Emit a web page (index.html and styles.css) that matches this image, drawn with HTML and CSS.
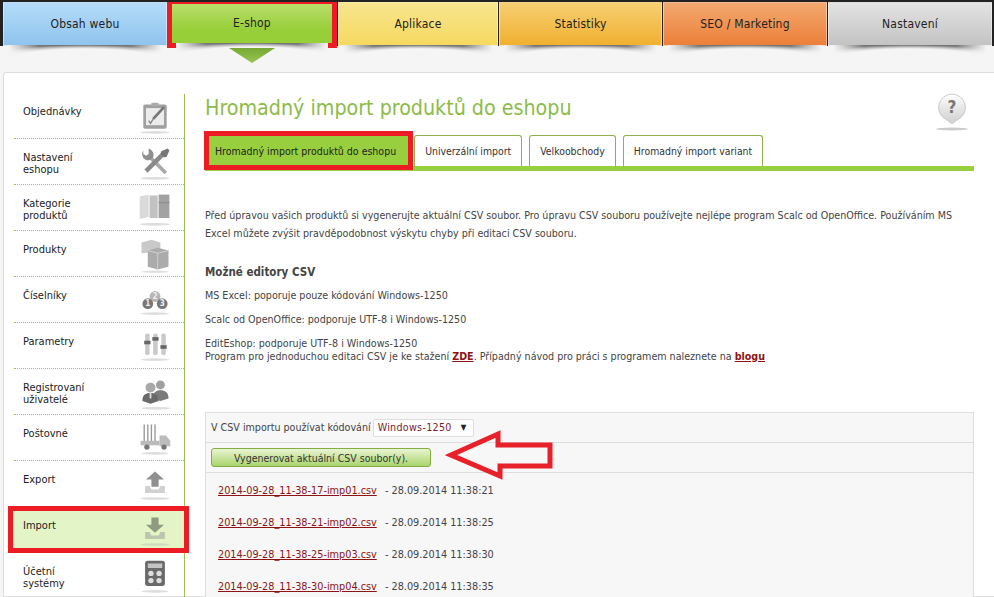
FILE: index.html
```html
<!DOCTYPE html>
<html lang="cs">
<head>
    <meta charset="UTF-8">
    <meta name="viewport" content="width=device-width, initial-scale=1.0">
    <title>Hromadný import produktů do eshopu</title>
    <link rel="stylesheet" href="styles.css">
</head>
<body>
    <!-- Top menu -->
    <nav class="top-nav">
        <a class="nav-item nav-blue">Obsah webu</a>
        <a class="nav-item nav-green nav-active">E-shop</a>
        <a class="nav-item nav-yellow">Aplikace</a>
        <a class="nav-item nav-amber">Statistiky</a>
        <a class="nav-item nav-orange">SEO / Marketing</a>
        <a class="nav-item nav-grey">Nastavení</a>
    </nav>

    <div class="page">
        <aside class="sidebar">
            <a class="side-item">
                <span class="side-label">Objednávky</span>
                <svg class="side-icon" viewBox="0 0 40 40"><rect x="7" y="5" width="26" height="27" rx="2" fill="#a0a0a0"/><rect x="10" y="9" width="20" height="19" fill="#ececec"/><rect x="16" y="3" width="8" height="4" rx="1" fill="#aaa"/><path d="M13 23l2 3 3-5" fill="none" stroke="#888" stroke-width="1.500"/><path d="M18 21L30 8" stroke="#777" stroke-width="3"/><ellipse cx="20" cy="36" rx="16" ry="1.500" fill="#ddd"/></svg>
            </a>
            <a class="side-item">
                <span class="side-label">Nastavení<br>eshopu</span>
                <svg class="side-icon" viewBox="0 0 40 40"><path d="M13 12l19 19" stroke="#a8a8a8" stroke-width="4"/><path d="M7 6a7 7 0 0 0 2 10 7 7 0 0 0 8-1 7 7 0 0 0 0-8 7 7 0 0 0-4-3v6l-3 2-3-2z" fill="#8f8f8f"/><path d="M28 11L10 29" stroke="#8a8a8a" stroke-width="5"/><path d="M27 7l7-3 2 2-3 7-3 1-4-4z" fill="#777"/><ellipse cx="20" cy="37" rx="16" ry="1.500" fill="#ddd"/></svg>
            </a>
            <a class="side-item">
                <span class="side-label">Kategorie<br>produktů</span>
                <svg class="side-icon" viewBox="0 0 40 40"><path d="M3 6l10-2v25l-10 2z" fill="#dadada"/><path d="M14 5h9v25h-9z" fill="#c2c2c2"/><path d="M24 4h12v26H24z" fill="#a2a2a2"/><path d="M24 13h12" stroke="#888"/><ellipse cx="20" cy="37" rx="17" ry="1.500" fill="#ddd"/></svg>
            </a>
            <a class="side-item">
                <span class="side-label">Produkty</span>
                <svg class="side-icon" viewBox="0 0 40 40"><path d="M5 6l11-3 10 3v10l-21 2z" fill="#c9c9c9"/><path d="M12 15l11-3 12 3v18l-12 3-11-3z" fill="#ababab"/><path d="M12 15l11 3 12-3M23 18v18" fill="none" stroke="#d5d5d5"/><ellipse cx="20" cy="38.500" rx="15" ry="1.200" fill="#ddd"/></svg>
            </a>
            <a class="side-item">
                <span class="side-label">Číselníky</span>
                <svg class="side-icon" viewBox="0 0 40 40"><circle cx="20" cy="15" r="6" fill="#b5b5b5"/><circle cx="12" cy="23" r="6" fill="#777"/><circle cx="28" cy="23" r="6" fill="#777"/><text class="icon-digit" x="20" y="18">2</text><text class="icon-digit" x="12" y="26">1</text><text class="icon-digit" x="28" y="26">3</text><ellipse cx="20" cy="34" rx="16" ry="1.500" fill="#ddd"/></svg>
            </a>
            <a class="side-item">
                <span class="side-label">Parametry</span>
                <svg class="side-icon" viewBox="0 0 40 40"><rect x="9" y="5" width="5" height="24" rx="2" fill="#c9c9c9"/><rect x="18" y="5" width="5" height="24" rx="2" fill="#c9c9c9"/><rect x="27" y="5" width="5" height="24" rx="2" fill="#c9c9c9"/><rect x="8" y="13" width="7" height="4" fill="#666"/><rect x="17" y="9" width="7" height="4" fill="#666"/><rect x="26" y="18" width="7" height="4" fill="#666"/><ellipse cx="20" cy="34" rx="16" ry="1.500" fill="#ddd"/></svg>
            </a>
            <a class="side-item">
                <span class="side-label">Registrovaní<br>uživatelé</span>
                <svg class="side-icon" viewBox="0 0 40 40"><circle cx="26" cy="11" r="5" fill="#a0a0a0"/><path d="M18 26c0-7 3-9 8-9s9 2 9 9l-9 3z" fill="#7b7b7b"/><circle cx="15" cy="14" r="5.500" fill="#a8a8a8"/><path d="M6 29c0-7 3-9 9-9s9 2 9 9l-9 3z" fill="#6a6a6a"/><path d="M15 20v6" stroke="#ddd" stroke-width="2"/><ellipse cx="21" cy="37" rx="16" ry="1.500" fill="#ddd"/></svg>
            </a>
            <a class="side-item">
                <span class="side-label">Poštovné</span>
                <svg class="side-icon" viewBox="0 0 40 40"><path d="M8 4v20M12 4v20M16 4v20M20 4v20" stroke="#999" stroke-width="1.500"/><rect x="4" y="22" width="21" height="5" fill="#bbb"/><path d="M25 16h7l5 6v6H25z" fill="#bcbcbc"/><circle cx="11" cy="29" r="3" fill="#777"/><circle cx="30" cy="29" r="3" fill="#777"/><ellipse cx="20" cy="36" rx="15" ry="1.500" fill="#ddd"/></svg>
            </a>
            <a class="side-item">
                <span class="side-label">Export</span>
                <svg class="side-icon" viewBox="0 0 40 40"><path d="M20 5l10 9h-6v8h-8v-8h-6z" fill="#909090"/><path d="M9 21h5l2 4h8l2-4h5v8H9z" fill="#d0d0d0"/><ellipse cx="20" cy="35" rx="16" ry="1.500" fill="#ddd"/></svg>
            </a>
            <a class="side-item side-active">
                <span class="side-label">Import</span>
                <svg class="side-icon" viewBox="0 0 40 40"><path d="M20 22L10 13h6V5h8v8h6z" fill="#8f9a80"/><path d="M9 21h5l2 4h8l2-4h5v8H9z" fill="#bcc6ae"/><ellipse cx="20" cy="35" rx="16" ry="1.500" fill="#cfdcbd"/></svg>
            </a>
            <a class="side-item">
                <span class="side-label">Účetní<br>systémy</span>
                <svg class="side-icon" viewBox="0 0 40 40"><rect x="9" y="2" width="22" height="28" rx="3" fill="#6a6a6a"/><rect x="12" y="5" width="16" height="5" fill="#c5c5c5"/><circle cx="15.500" cy="16" r="3" fill="#ddd"/><circle cx="24.500" cy="16" r="3" fill="#ddd"/><circle cx="15.500" cy="24" r="3" fill="#ddd"/><circle cx="24.500" cy="24" r="3" fill="#ddd"/><ellipse cx="20" cy="36" rx="15" ry="1.500" fill="#ddd"/></svg>
            </a>
        </aside>

        <main class="content">
            <div class="title-row">
                <h1>Hromadný import produktů do eshopu</h1>
                <svg class="help-icon" viewBox="0 0 34 40"><defs><linearGradient id="helpfill" x1="0" y1="0" x2="0" y2="1"><stop offset="0" stop-color="#fdfdfd"/><stop offset="1" stop-color="#cfcfcf"/></linearGradient></defs><path d="M17 2a13.500 13.500 0 0 1 5 26l-5 4-5-4A13.500 13.500 0 0 1 17 2z" fill="url(#helpfill)" stroke="#ccc"/><text class="help-mark" x="17" y="21">?</text><ellipse cx="17" cy="37" rx="16" ry="1.500" fill="#ccc"/></svg>
            </div>

            <div class="tabs">
                <a class="tab tab-active">Hromadný import produktů do eshopu</a>
                <a class="tab">Univerzální import</a>
                <a class="tab">Velkoobchody</a>
                <a class="tab">Hromadný import variant</a>
            </div>

            <p class="intro">Před úpravou vašich produktů si vygenerujte aktuální CSV soubor. Pro úpravu CSV souboru používejte nejlépe program Scalc od OpenOffice. Používáním MS Excel můžete zvýšit pravděpodobnost výskytu chyby při editaci CSV souboru.</p>

            <h2>Možné editory CSV</h2>
            <p class="editor">MS Excel: poporuje pouze kódování Windows-1250</p>
            <p class="editor">Scalc od OpenOffice: podporuje UTF-8 i Windows-1250</p>
            <p class="editor">EditEshop: podporuje UTF-8 i Windows-1250<br>Program pro jednoduchou editaci CSV je ke stažení <a class="strong-link">ZDE</a>. Případný návod pro práci s programem naleznete na <a class="strong-link">blogu</a></p>

            <section class="csv-box">
                <div class="csv-row">
                    V CSV importu používat kódování
                    <span class="fake-select">Windows-1250 <i class="select-arrow">▼</i></span>
                </div>
                <div class="csv-row csv-row-button">
                    <button type="button">Vygenerovat aktuální CSV soubor(y).</button>
                    <svg class="red-arrow" viewBox="0 0 112 50"><path d="M6 25L53 4v11h52v21H55v10z" fill="none" stroke="#e8202a" stroke-width="5"/></svg>
                </div>
                <ul class="csv-list">
                    <li><a>2014-09-28_11-38-17-imp01.csv</a> - 28.09.2014 11:38:21</li>
                    <li><a>2014-09-28_11-38-21-imp02.csv</a> - 28.09.2014 11:38:25</li>
                    <li><a>2014-09-28_11-38-25-imp03.csv</a> - 28.09.2014 11:38:30</li>
                    <li><a>2014-09-28_11-38-30-imp04.csv</a> - 28.09.2014 11:38:35</li>
                </ul>
            </section>
        </main>
    </div>
</body>
</html>
```

FILE: styles.css
```css
html, body {
    margin: 0;
    height: 597px;
    overflow: hidden;
}
body {
    font-family: "DejaVu Sans Condensed", "DejaVu Sans", Verdana, sans-serif;
    font-stretch: condensed;
    font-size: 10.64px;
    color: #444;
    background: linear-gradient(#222 46px, #f5f5f5 46px);
}
.top-nav {
    display: flex;
    height: 44px;
    padding: 2px 1px 0 3px;
}
.nav-item {
    position: relative;
    flex: 1;
    display: flex;
    align-items: center;
    justify-content: center;
    box-sizing: border-box;
    border: 1px solid rgba(255, 255, 255, 0.45);
    margin-right: 1px;
    padding-bottom: 1px;
    font-size: 12px;
    letter-spacing: 0.2px;
    color: #222;
}
/* curved shadow under each menu item */
.nav-item::after {
    content: "";
    position: absolute;
    left: 4px;
    right: 4px;
    top: 100%;
    height: 12px;
    background:
        linear-gradient(to right, #f5f5f5, rgba(245, 245, 245, 0) 20%, rgba(245, 245, 245, 0) 80%, #f5f5f5),
        radial-gradient(ellipse 62% 115% at 50% 115%, #f5f5f5 72%, rgba(245, 245, 245, 0) 100%),
        linear-gradient(#6f6f6f, #f5f5f5 90%);
}
.nav-blue { background: linear-gradient(#b4dcf9, #8fc4ee); }
.nav-green { background: linear-gradient(#bbdd6c, #97cf39 65%); }
.nav-yellow { flex: none; width: 160px; background: linear-gradient(#f8e58f, #f5d95f); }
.nav-amber { flex: none; width: 163px; background: linear-gradient(#f6cf72, #f1b030); }
.nav-orange { flex: none; width: 164px; background: linear-gradient(#f3a96f, #ec7f3a); }
.nav-grey { background: linear-gradient(#e3e3e3, #c3c3c3); }
.nav-active {
    flex: none;
    width: 170px;
    height: 46px;
    margin: 0 1px 0 -1px;
    border: 5px solid #ed1c24;
    border-top-width: 2px;
}
.nav-active::before {
    content: "";
    position: absolute;
    z-index: 1;
    left: 57px;
    top: 100%;
    margin-top: 5px;
    width: 46px;
    height: 15px;
    background: linear-gradient(#76a832, #98c653);
    clip-path: polygon(0 0, 100% 0, 50% 100%);
}

.page {
    display: flex;
    box-sizing: border-box;
    height: 525px;
    margin: 26px 0 0 3px;
    padding: 21px 20px 0 10px;
    background: #fff;
    border: 1px solid #ddd;
    border-right: 0;
    border-radius: 3px 0 0 0;
}

.sidebar {
    flex: none;
    width: 170px;
    height: 504px;
    border-right: 1px solid #9cc14f;
}
.side-item {
    display: flex;
    justify-content: space-between;
    box-sizing: border-box;
    height: 46px;
    padding: 13px 11px 0 9px;
    border-bottom: 1px dotted #9cc14f;
    color: #222;
    line-height: 12px;
}
.side-item:first-child {
    height: 45px;
    padding-top: 12px;
}
.side-item:last-child {
    border-bottom: 0;
}
.side-label {
    font-size: 11px;
}
.side-icon {
    flex: none;
    width: 36px;
    height: 36px;
    margin-top: -7px;
}
.side-item:first-child .side-icon {
    margin-top: -6px;
}
.icon-digit {
    font-size: 9px;
    font-weight: bold;
    fill: #eee;
    text-anchor: middle;
}
.side-active {
    position: relative;
    margin: -1px -5px 0 -6px;
    padding: 9px 11px 0 10px;
    height: 47px;
    background: #e3f5c6;
    border: 5px solid #ed1c24;
}

.content {
    flex: 1;
    padding-left: 20px;
    min-width: 0;
}
.title-row {
    display: flex;
    justify-content: space-between;
    height: 37px;
}
h1 {
    margin: 0;
    font-size: 21.25px;
    font-weight: normal;
    line-height: 27px;
    color: #8dbb4a;
}
.help-icon {
    width: 34px;
    height: 40px;
    margin: -2px 5px 0 0;
}
.help-mark {
    font-size: 17px;
    font-weight: bold;
    fill: #777;
    text-anchor: middle;
}

.tabs {
    display: flex;
    align-items: flex-end;
    gap: 7px;
    height: 35px;
    border-bottom: 5px solid #98cf3f;
}
.tab {
    display: flex;
    align-items: center;
    box-sizing: border-box;
    height: 31px;
    padding: 0 10px;
    border: 1px solid #8fb04b;
    border-bottom: 0;
    border-radius: 3px 3px 0 0;
    font-size: 10.4px;
    color: #333;
}
.tab-active {
    height: 39px;
    margin: 0 -6px -4px -1px;
    padding: 0 12px 0 6px;
    border: 5px solid #ed1c24;
    border-radius: 0;
    background: #98cf3f;
    color: #222;
    font-size: 10.5px;
}

.intro {
    margin: 36px 0 0;
    line-height: 18px;
}
h2 {
    margin: 20px 0 0;
    font-size: 11.5px;
    line-height: 18px;
    color: #444;
}
.editor {
    margin: 3px 0 0;
    line-height: 13px;
    padding-top: 5px;
}
.editor + .editor {
    margin-top: 6px;
}
.strong-link {
    font-weight: bold;
    color: #8c1414;
    text-decoration: underline;
}

.csv-box {
    margin-top: 49px;
    background: #f7f7f7;
    border: 1px solid #ddd;
    border-bottom: 0;
}
.csv-row {
    display: flex;
    align-items: center;
    gap: 2px;
    box-sizing: border-box;
    height: 30px;
    padding: 0 5px;
    border-bottom: 1px solid #ddd;
}
.fake-select {
    display: flex;
    justify-content: space-between;
    align-items: center;
    box-sizing: border-box;
    width: 101px;
    height: 18px;
    padding: 0 6px 0 4px;
    background: #fff;
    border: 1px solid #ddd;
    border-radius: 2px;
    color: #7c1c2c;
    letter-spacing: 0.3px;
}
.select-arrow {
    font-style: normal;
    font-size: 8px;
    color: #222;
}
.csv-row-button {
    position: relative;
}
button {
    width: 220px;
    height: 19px;
    padding: 0;
    background: linear-gradient(#eaf5d2, #a9d46d);
    border: 1px solid #83ad42;
    border-radius: 3px;
    font-family: inherit;
    font-stretch: inherit;
    font-size: 10.5px;
    color: #333;
}
.red-arrow {
    position: absolute;
    left: 239px;
    top: -13px;
    width: 112px;
    height: 50px;
}
.csv-list {
    margin: 0;
    padding: 9px 0 0 12px;
    list-style: none;
    font-size: 10.8px;
}
.csv-list li {
    height: 32px;
    line-height: 18px;
}
.csv-list a {
    margin-right: 5px;
    color: #8c1414;
    text-decoration: underline;
}
```
